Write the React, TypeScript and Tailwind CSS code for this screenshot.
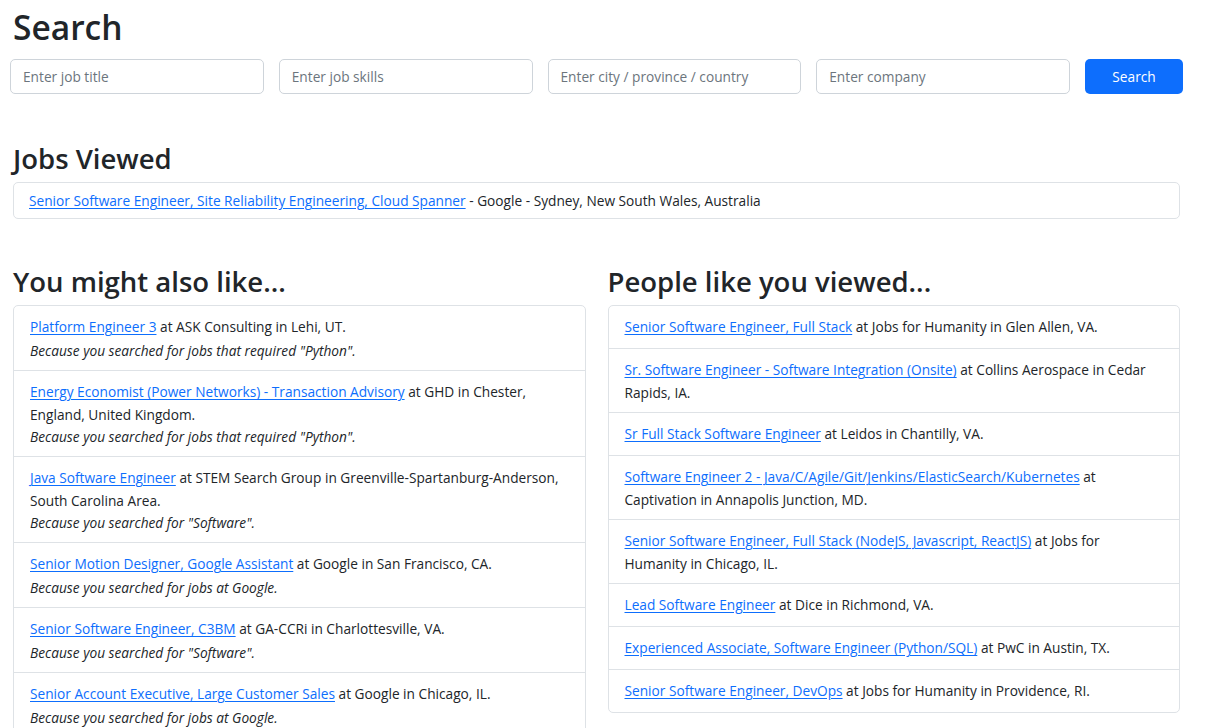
import React from 'react'

type Job = {
    title: string
    rest: string
    reason?: string
}

const PY = 'Because you searched for jobs that required "Python".'
const SW = 'Because you searched for "Software".'
const GO = 'Because you searched for jobs at Google.'

const mightLike: Job[] = [
    { title: 'Platform Engineer 3', rest: 'at ASK Consulting in Lehi, UT.', reason: PY },
    { title: 'Energy Economist (Power Networks) - Transaction Advisory', rest: 'at GHD in Chester, England, United Kingdom.', reason: PY },
    { title: 'Java Software Engineer', rest: 'at STEM Search Group in Greenville-Spartanburg-Anderson, South Carolina Area.', reason: SW },
    { title: 'Senior Motion Designer, Google Assistant', rest: 'at Google in San Francisco, CA.', reason: GO },
    { title: 'Senior Software Engineer, C3BM', rest: 'at GA-CCRi in Charlottesville, VA.', reason: SW },
    { title: 'Senior Account Executive, Large Customer Sales', rest: 'at Google in Chicago, IL.', reason: GO },
]

const peopleViewed: Job[] = [
    { title: 'Senior Software Engineer, Full Stack', rest: 'at Jobs for Humanity in Glen Allen, VA.' },
    { title: 'Sr. Software Engineer - Software Integration (Onsite)', rest: 'at Collins Aerospace in Cedar Rapids, IA.' },
    { title: 'Sr Full Stack Software Engineer', rest: 'at Leidos in Chantilly, VA.' },
    { title: 'Software Engineer 2 - Java/C/Agile/Git/Jenkins/ElasticSearch/Kubernetes', rest: 'at Captivation in Annapolis Junction, MD.' },
    { title: 'Senior Software Engineer, Full Stack (NodeJS, Javascript, ReactJS)', rest: 'at Jobs for Humanity in Chicago, IL.' },
    { title: 'Lead Software Engineer', rest: 'at Dice in Richmond, VA.' },
    { title: 'Experienced Associate, Software Engineer (Python/SQL)', rest: 'at PwC in Austin, TX.' },
    { title: 'Senior Software Engineer, DevOps', rest: 'at Jobs for Humanity in Providence, RI.' },
]

// first line sits a bit taller than the rest, so the link carries a small margin
const JobLink = ({ title }: { title: string }) => (
    <a href="#" className="inline-block my-[2px] text-[#0d6efd] underline underline-offset-2">
        {title}
    </a>
)

const JobList = ({ jobs }: { jobs: Job[] }) => (
    <ul className="border border-[#dee2e6] rounded-[5px]">
        {jobs.map((job, i) => (
            <li key={i} className="px-4 pt-2 pb-[9px] border-t first:border-t-0 border-[#dee2e6]">
                <p className="leading-[21px]">
                    <JobLink title={job.title} /> {job.rest}
                </p>
                {job.reason && <p className="italic leading-[21px] mt-[1px]">{job.reason}</p>}
            </li>
        ))}
    </ul>
)

const inputCls = 'flex-1 min-w-0 h-[35px] px-3 border border-[#ced4da] rounded-[5px] text-[13.7px] text-[#212529] placeholder:text-[#6c757d] outline-none'

const headingCls = 'text-[27.5px] font-semibold leading-[38px] mb-[4px]'

export default function App() {
    return (
        <div className="min-h-screen bg-white text-[#212529] text-[13.7px] px-[13px] pt-[3px] pb-4 w-[1193px]" style={{ fontFamily: '"Open Sans", sans-serif' }}>
            <h1 className="text-[33.5px] font-semibold leading-[48px]">Search</h1>

            <div className="flex gap-[15px] -mx-[3px] mt-[8px]">
                <input className={inputCls} placeholder="Enter job title" />
                <input className={inputCls} placeholder="Enter job skills" />
                <input className={inputCls} placeholder="Enter city / province / country" />
                <input className={inputCls} placeholder="Enter company" />
                <button className="w-[98px] h-[35px] rounded-[5px] bg-[#0d6efd] text-white text-[13.7px] pt-[1px]">Search</button>
            </div>

            {/* Jobs viewed */}
            <h2 className={`${headingCls} mt-[46px]`}>Jobs Viewed</h2>
            <div className="border border-[#dee2e6] rounded-[5px] px-[15px] py-[5px] leading-[21px]">
                <JobLink title="Senior Software Engineer, Site Reliability Engineering, Cloud Spanner" /> - Google - Sydney, New South Wales, Australia
            </div>

            <div className="grid grid-cols-2 gap-[22px] mt-[44px]">
                <section>
                    <h2 className={headingCls}>You might also like...</h2>
                    <JobList jobs={mightLike} />
                </section>
                <section>
                    <h2 className={headingCls}>People like you viewed...</h2>
                    <JobList jobs={peopleViewed} />
                </section>
            </div>
        </div>
    )
}
